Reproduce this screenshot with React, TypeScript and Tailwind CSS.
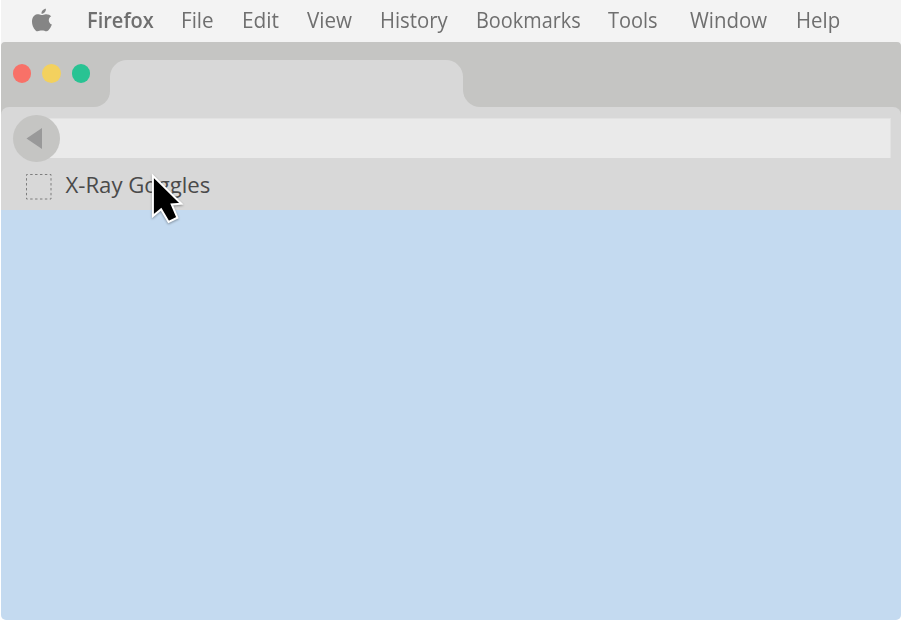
const menus = [
  { label: "File", box: "w-[61px]", scale: "scale-x-[0.96]" },
  { label: "Edit", box: "w-[65px]", scale: "scale-x-[0.97]" },
  { label: "View", box: "w-[73px]", scale: "scale-x-[0.96]" },
  { label: "History", box: "w-[96px]", scale: "scale-x-[0.945]" },
  { label: "Bookmarks", box: "w-[132px]", scale: "scale-x-[0.925]" },
  { label: "Tools", box: "w-[82px]", scale: "scale-x-[0.93]" },
  { label: "Window", box: "w-[106px]", scale: "scale-x-[0.95]" },
  { label: "Help", box: "w-[50px]", scale: "scale-x-[0.95]" },
];

function AppleLogo() {
  return (
    <svg className="mt-[8px] ml-[30px] h-[24px] w-[21px] shrink-0" viewBox="0 0 21 24" fill="#858585">
      <path d="M14.9.7c.2 1.4-.4 2.7-1.2 3.6-.8 1-2 1.6-3.2 1.5-.2-1.4.4-2.7 1.2-3.6C12.5 1.300 13.800.7 14.900.7Z" />
      <path d="M20.200 8.200c-3.600 2.100-3 7 .7 8.400-.8 2.200-2.100 4.300-3.400 5.700-1.900 2-3.800.2-6.500.2-2.700 0-4.600 1.700-6.400-.1C1.700 19.500.6 15.500 1.100 12.100c.6-4.200 3.600-6.100 6.500-5.800 1.400.1 2.400.8 3.400.8s2.200-.8 3.900-.9c2.200-.1 4.100.6 5.300 2Z" />
    </svg>
  );
}

function MenuBar() {
  return (
    <div className="flex h-[42px] bg-[#f3f3f3] text-[21.5px] leading-[40px] text-[#6f6f6f]">
      <AppleLogo />
      <span className="ml-[34.500px] w-[94px] whitespace-nowrap font-semibold">
        <span className="inline-block origin-left scale-x-[0.93]">Firefox</span>
      </span>
      {menus.map((m) => (
        <span key={m.label} className={`${m.box} shrink-0 whitespace-nowrap`}>
          <span className={`inline-block origin-left ${m.scale}`}>{m.label}</span>
        </span>
      ))}
    </div>
  );
}

function TabStrip() {
  return (
    <div className="flex h-[65px] bg-[#d8d8d8]">
      <div className="flex w-[109px] gap-[11px] rounded-tl-[4px] rounded-br-[16px] bg-[#c5c5c3] pt-[22px] pl-[11.500px]">
        <div className="size-[18.500px] rounded-full bg-[#f87168]" />
        <div className="size-[18.500px] rounded-full bg-[#f3d15e]" />
        <div className="size-[18.500px] rounded-full bg-[#29c393]" />
      </div>
      <div className="w-[353px] bg-[#c5c5c3]">
        <div className="mt-[18px] h-[47px] rounded-t-[17px] bg-[#d8d8d8]" />
      </div>
      <div className="flex-1 rounded-tr-[4px] rounded-bl-[17px] bg-[#c5c5c3]" />
    </div>
  );
}

function Toolbar() {
  return (
    <div className="bg-[#c5c5c3]">
      <div className="h-[103px] rounded-t-[8px] bg-[#d8d8d8] pt-[7px]">
        <div className="flex h-[48px] items-center pr-[10px] pl-[12px]">
          <div className="z-10 flex size-[47px] shrink-0 items-center rounded-full bg-[#c5c5c3] pl-[13px]">
            <svg className="h-[21px] w-[17px]" viewBox="0 0 17 21">
              <path d="M.5 10.500 16 0V21Z" fill="#999" />
            </svg>
          </div>
          <div className="-ml-[20px] h-[40px] flex-1 border-t border-r border-[#e2e2e2] bg-[#eaeaea]" />
        </div>
        <div className="flex h-[48px] items-start pl-[25px]">
          <svg className="mt-[12px] h-[26px] w-[26px]" viewBox="0 0 26 26">
            <rect x=".5" y=".5" width="24.500" height="24.500" fill="none" stroke="#7d7d7d" strokeDasharray="2.450" strokeDashoffset="1.225" />
          </svg>
          <span className="ml-[13.500px] text-[22.15px] leading-[45px] text-[#4a4a4a]">X-Ray Goggles</span>
        </div>
      </div>
    </div>
  );
}

export default function App() {
  return (
    <div className="relative h-[621px] w-[901px] overflow-hidden bg-white pl-px font-['Open_Sans','Noto_Sans',sans-serif]">
      <MenuBar />
      <div className="bg-[#f3f3f3]">
        <div className="overflow-hidden rounded-t-[4px]">
          <TabStrip />
          <Toolbar />
        </div>
      </div>
      <div className="h-[410px] rounded-b-[5px] bg-[#c4daf0]" />
      <svg
        className="absolute top-[170px] left-[148px] h-[58px] w-[42px] drop-shadow-[0_1px_1px_rgba(0,0,0,0.35)]"
        viewBox="148 170 42 58"
      >
        <path
          d="M152.900 175.900V216.100L161.100 209.200L168.600 222L177.400 217.700L171.700 204.500L181.300 203.700Z"
          fill="#000"
          stroke="#fff"
          strokeWidth="2"
        />
      </svg>
    </div>
  );
}
